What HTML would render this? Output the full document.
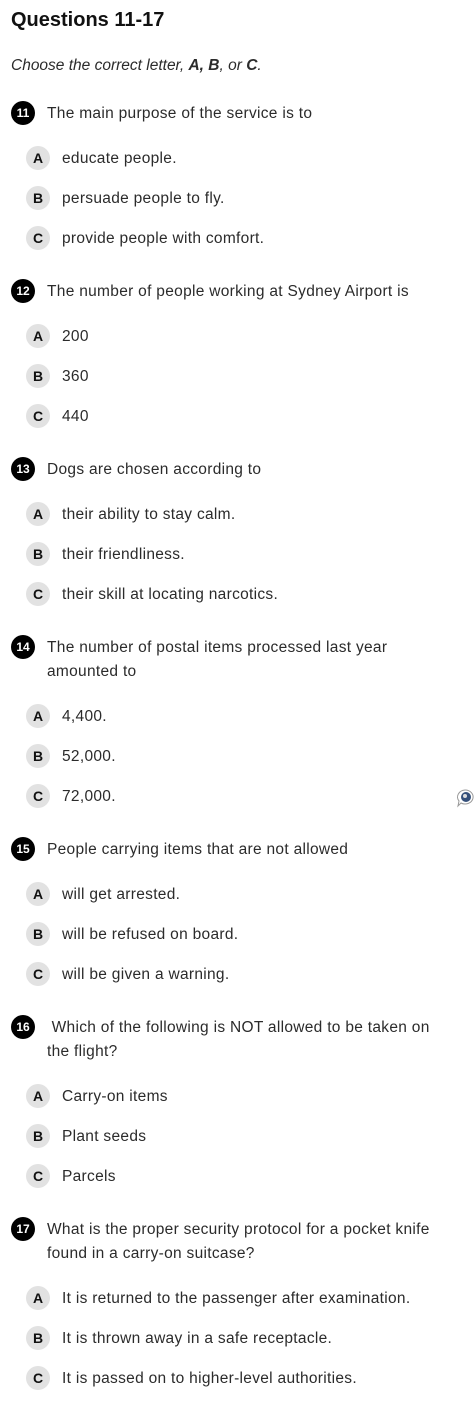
<!DOCTYPE html>
<html><head><meta charset="utf-8"><style>
body{margin:0;width:475px;height:1407px;background:#fff;font-family:"Liberation Sans",sans-serif;color:#2b2b2b;position:relative;overflow:hidden}
.a{position:absolute;white-space:nowrap}
h1{position:absolute;left:11px;top:9px;margin:0;font-size:20px;font-weight:bold;color:#111}
.ins{left:11px;top:57px;font-size:15.5px;font-style:italic}
.q{left:47px;font-size:15.5px;line-height:24px;letter-spacing:0.3px}
.n{position:absolute;left:11px;width:24px;height:24px;border-radius:50%;background:#000;color:#fff;font-size:12px;font-weight:bold;text-align:center;line-height:24px}
.o{position:absolute;left:26px;width:24px;height:24px;border-radius:50%;background:#e2e2e2;color:#111;font-size:14px;font-weight:bold;text-align:center;line-height:24px}
.t{left:62px;font-size:15.5px;line-height:24px;letter-spacing:0.3px}
.q,.t{margin-top:1px}
</style></head><body>
<h1>Questions 11-17</h1>
<div class="a ins">Choose the correct letter, <b>A, B</b>, or <b>C</b>.</div>

<div class="n" style="top:101px">11</div><div class="a q" style="top:101px">The main purpose of the service is to</div>
<div class="o" style="top:146px">A</div><div class="a t" style="top:146px">educate people.</div>
<div class="o" style="top:186px">B</div><div class="a t" style="top:186px">persuade people to fly.</div>
<div class="o" style="top:226px">C</div><div class="a t" style="top:226px">provide people with comfort.</div>

<div class="n" style="top:279px">12</div><div class="a q" style="top:279px">The number of people working at Sydney Airport is</div>
<div class="o" style="top:324px">A</div><div class="a t" style="top:324px">200</div>
<div class="o" style="top:364px">B</div><div class="a t" style="top:364px">360</div>
<div class="o" style="top:404px">C</div><div class="a t" style="top:404px">440</div>

<div class="n" style="top:457px">13</div><div class="a q" style="top:457px">Dogs are chosen according to</div>
<div class="o" style="top:502px">A</div><div class="a t" style="top:502px">their ability to stay calm.</div>
<div class="o" style="top:542px">B</div><div class="a t" style="top:542px">their friendliness.</div>
<div class="o" style="top:582px">C</div><div class="a t" style="top:582px">their skill at locating narcotics.</div>

<div class="n" style="top:635px">14</div><div class="a q" style="top:635px">The number of postal items processed last year<br>amounted to</div>
<div class="o" style="top:704px">A</div><div class="a t" style="top:704px">4,400.</div>
<div class="o" style="top:744px">B</div><div class="a t" style="top:744px">52,000.</div>
<div class="o" style="top:784px">C</div><div class="a t" style="top:784px">72,000.</div>
<svg class="a" style="left:455px;top:788px" width="20" height="20" viewBox="0 0 20 20"><path d="M10 2a8 7 0 1 1-4 13l-3 3 1-5A8 7 0 0 1 10 2z" fill="#fff" stroke="#999"/><circle cx="11" cy="9" r="5" fill="#35507a"/><circle cx="10" cy="8" r="2" fill="#ddd"/></svg>

<div class="n" style="top:837px">15</div><div class="a q" style="top:837px">People carrying items that are not allowed</div>
<div class="o" style="top:882px">A</div><div class="a t" style="top:882px">will get arrested.</div>
<div class="o" style="top:922px">B</div><div class="a t" style="top:922px">will be refused on board.</div>
<div class="o" style="top:962px">C</div><div class="a t" style="top:962px">will be given a warning.</div>

<div class="n" style="top:1015px">16</div><div class="a q" style="top:1015px">&nbsp;Which of the following is NOT allowed to be taken on<br>the flight?</div>
<div class="o" style="top:1084px">A</div><div class="a t" style="top:1084px">Carry-on items</div>
<div class="o" style="top:1124px">B</div><div class="a t" style="top:1124px">Plant seeds</div>
<div class="o" style="top:1164px">C</div><div class="a t" style="top:1164px">Parcels</div>

<div class="n" style="top:1217px">17</div><div class="a q" style="top:1217px">What is the proper security protocol for a pocket knife<br>found in a carry-on suitcase?</div>
<div class="o" style="top:1286px">A</div><div class="a t" style="top:1286px">It is returned to the passenger after examination.</div>
<div class="o" style="top:1326px">B</div><div class="a t" style="top:1326px">It is thrown away in a safe receptacle.</div>
<div class="o" style="top:1366px">C</div><div class="a t" style="top:1366px">It is passed on to higher-level authorities.</div>
</body></html>
